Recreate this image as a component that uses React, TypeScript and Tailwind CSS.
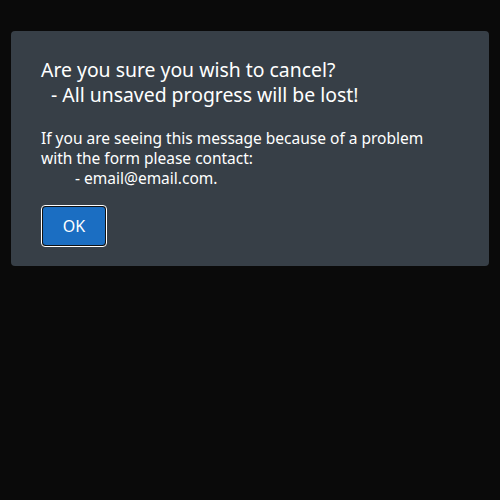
export default function App() {
  return (
    <div className="w-[500px] h-[500px] bg-[#0a0a0a] pt-[31px] px-[11px]" style={{ fontFamily: '"Noto Sans", "Open Sans", sans-serif' }}>
      <div className="bg-[#373f47] rounded-[4px] h-[235px] px-[30px] pt-[26px] text-white">
        <div className="text-[19.4px] leading-[25px]">
          <div>Are you sure you wish to cancel?</div>
          <div className="pl-[10px]">- All unsaved progress will be lost!</div>
        </div>
        <div className="mt-[21px] text-[15.5px] leading-[20px]">
          <div>If you are seeing this message because of a problem</div>
          <div>with the form please contact:</div>
          <div className="pl-[34px]">- email@email.com.</div>
        </div>
        <div className="mt-[17px]">
          <button className="w-[66px] h-[42px] rounded-[4px] border border-white p-[1px] bg-[#111]">
            <span className="flex items-center justify-center w-full h-full rounded-[3px] bg-[#1b6ec2] text-[16px] text-white">OK</span>
          </button>
        </div>
      </div>
    </div>
  );
}
